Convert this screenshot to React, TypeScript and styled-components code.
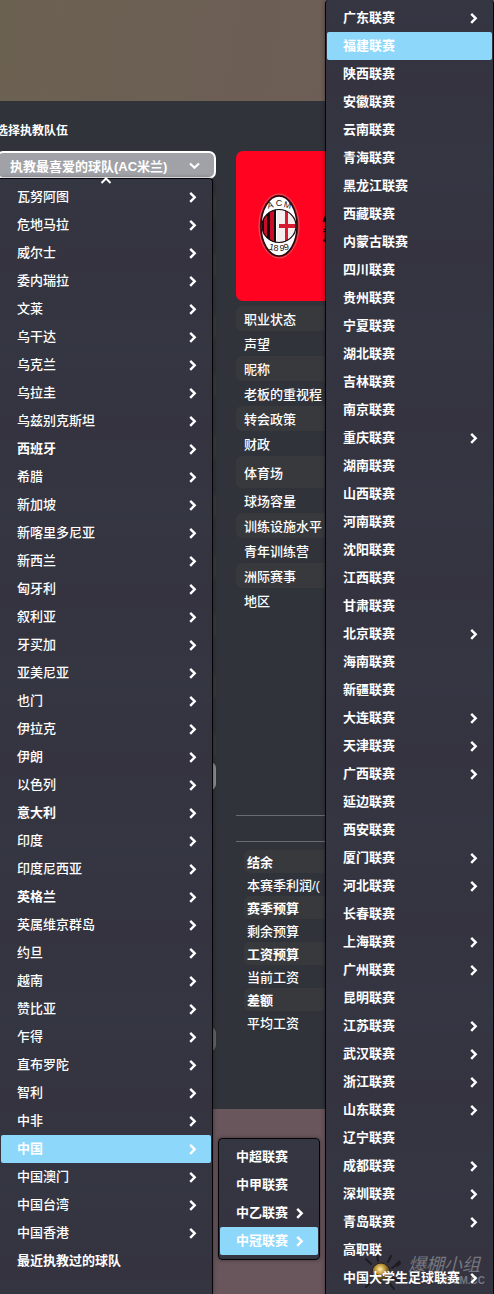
import React from 'react';
import styled, { createGlobalStyle, css } from 'styled-components';

const GlobalStyle = createGlobalStyle`
  * { box-sizing: border-box; }
  body {
    margin: 0;
    background: #6b575d;
    color: #fff;
    font-family: "Liberation Sans", "Noto Sans CJK SC", sans-serif;
    font-size: 13px;
  }
  button, select { font: inherit; color: inherit; }
  ul, dl, dd { margin: 0; padding: 0; list-style: none; }
`;

const Page = styled.div`
  position: relative;
  min-height: 100vh;
  overflow: hidden;
  display: flex;
  flex-direction: column;
  background: linear-gradient(#6b575d, #69565c);
`;

const TopBand = styled.header`
  height: 101px;
  background: linear-gradient(100deg, #6b6151, #6d5e56 60%, #6b5b58);
`;

const Panel = styled.main`
  display: flex;
  gap: 20px;
  min-height: 1008px;
  background: #30333a;
`;

const Side = styled.section`
  flex: 0 0 216px;
  display: flex;
  flex-direction: column;
`;

const Title = styled.label`
  height: 50px;
  padding-top: 21px;
  margin-left: -4px;
  font-size: 12px;
  line-height: 18px;
  font-weight: 700;
`;

const SelectBox = styled.div`
  display: flex;
  align-items: center;
  height: 28px;
  margin-left: -4px;
  padding: 2px 14px 0 0;
  border: 2px solid #fff;
  border-radius: 7px;
  background: #a1a2a8;
`;

const Select = styled.select`
  flex: 1;
  min-width: 0;
  padding: 0 0 0 12px;
  border: 0;
  appearance: none;
  background: transparent;
  font-weight: 700;
  outline: none;
`;

const TeamList = styled.div`
  margin-top: 13px;
  height: 570px;
  display: grid;
  grid-auto-rows: 28px;
  row-gap: 32px;
`;

const TeamStripe = styled.div`
  border-radius: 6px;
  background: #38393c;
`;

const Bar = styled.div<{ $color: string; $height: number }>`
  height: ${(p) => p.$height}px;
  border-radius: 6px;
  background: ${(p) => p.$color};
`;

const BarStack = styled.div`
  display: flex;
  flex-direction: column;
  gap: 237px;
`;

const Detail = styled.section`
  flex: 1;
  min-width: 0;
  padding-top: 50px;
`;

const Card = styled.div`
  display: flex;
  align-items: center;
  gap: 22px;
  height: 150px;
  padding-left: 22px;
  border-radius: 7px 0 0 7px;
  background: #ff0320;
  color: #140408;
`;

const CardText = styled.div`
  font-size: 14px;
  line-height: 18px;
  font-weight: 700;
  white-space: nowrap;
`;

const Facts = styled.dl`
  margin-top: 5px;
`;

const Fact = styled.div<{ $shade?: boolean; $tall?: boolean }>`
  display: flex;
  align-items: center;
  height: ${(p) => (p.$tall ? 32 : 25)}px;
  padding-left: 8px;
  border-radius: 6px;
  background: ${(p) => (p.$shade ? '#38393d' : 'transparent')};
  font-weight: 500;
  white-space: nowrap;
`;

const Divider = styled.div`
  height: 27px;
  margin: 202px 0 8px;
  border: solid #696c70;
  border-width: 1px 0;
`;

const Finance = styled.dl`
  padding-left: 8px;
`;

const FinanceRow = styled.div<{ $head?: boolean }>`
  display: flex;
  align-items: center;
  height: 23px;
  padding-left: 3px;
  border-radius: 6px;
  background: ${(p) => (p.$head ? '#38393d' : 'transparent')};
  font-weight: ${(p) => (p.$head ? 700 : 500)};
  white-space: nowrap;
`;

const menuPlace = {
  nation: css`
    top: 178px;
    bottom: 0;
    left: 0;
    width: 213px;
    border-width: 1px 1px 0 0;
    border-radius: 0 4px 0 0;
    padding: 4px 1px 0;
  `,
  tier: css`
    top: 1138px;
    left: 218px;
    width: 102px;
    border-width: 1px;
    border-radius: 4px;
    padding: 4px 1px;
  `,
  region: css`
    top: 0;
    bottom: 0;
    left: 325px;
    right: 0;
    border-width: 0 1px;
    border-radius: 4px 4px 0 0;
    padding: 4px 1px 2px;
  `,
};

const Menu = styled.nav<{ $place: keyof typeof menuPlace }>`
  position: absolute;
  border: solid #050507;
  background: repeating-linear-gradient(#343642, #353340 84px, #343642 168px);
  box-shadow: 0 0 4px rgba(0, 0, 0, 0.4);
  ${(p) => menuPlace[p.$place]}
`;

const Row = styled.button<{ $bold?: boolean; $active?: boolean }>`
  position: relative;
  display: flex;
  align-items: center;
  justify-content: space-between;
  width: 100%;
  height: 28px;
  padding: 0 14px 0 16px;
  border: 0;
  border-radius: 2px;
  background: ${(p) => (p.$active ? '#8dd7fb' : 'transparent')};
  font-weight: ${(p) => (p.$bold ? 700 : 500)};
  text-align: left;
  white-space: nowrap;
`;

const RowLabel = styled.span`
  padding-bottom: 4px;
`;

const ScrollHint = styled.svg`
  position: absolute;
  top: -2px;
  left: 100px;
`;

const Watermark = styled.div`
  position: absolute;
  right: 8px;
  bottom: 0;
  display: flex;
  align-items: flex-end;
  gap: 6px;
  color: #76777f;
`;

const WatermarkText = styled.div`
  width: 77px;
  padding-bottom: 8px;
  font-size: 18px;
  line-height: 21px;
  font-style: italic;
`;

const WatermarkUrl = styled.div`
  font-size: 10px;
  line-height: 10px;
  font-style: normal;
  font-weight: 700;
  text-align: right;
`;

const Chevron = () => (
  <svg width="8" height="12" viewBox="0 0 8 12" fill="none" stroke="#fff" strokeWidth="2.4" aria-hidden="true">
    <path d="M1.200 1.800 5.700 6.300 1.200 10.800" />
  </svg>
);

const Crest = () => (
  <svg width="42" height="68" viewBox="0 0 42 68" role="img" aria-label="AC Milan 1899">
    <defs>
      <clipPath id="disc"><ellipse cx="21" cy="34" rx="17" ry="16.500" /></clipPath>
    </defs>
    <ellipse cx="21" cy="34" rx="20" ry="32" fill="#c20b22" stroke="#dd5b5d" />
    <ellipse cx="21" cy="34" rx="18" ry="30" fill="#fff" stroke="#23070c" strokeWidth="1.5" />
    <g clipPath="url(#disc)">
      <path fill="#17080b" d="M3 16h15v36H3z" />
      <path fill="#c90d28" d="M6 16h3v36H6zM12 16h4v36h-4z" />
      <path fill="#f5eeee" d="M19 16h20v36H19z" />
      <path fill="#d71932" d="M27 16h3v36h-3zM21 32h18v4H21z" />
    </g>
    <ellipse cx="21" cy="34" rx="17" ry="16.500" fill="none" stroke="#16090b" strokeWidth="1.2" />
    <g fill="#1c1518" fontFamily="Liberation Sans" fontSize="9" textAnchor="middle">
      <text x="13" y="16" transform="rotate(-14 13 16)">A</text>
      <text x="21" y="14">C</text>
      <text x="29" y="16" transform="rotate(14 29 16)">M</text>
      <text x="13" y="58" transform="rotate(12 13 58)">1</text>
      <text x="18" y="59">8</text>
      <text x="24" y="59">9</text>
      <text x="29" y="58" transform="rotate(-12 29 58)">9</text>
    </g>
  </svg>
);

const Sun = () => (
  <svg width="40" height="42" viewBox="0 0 40 42" aria-hidden="true">
    <defs>
      <radialGradient id="sun" cx="45%" cy="35%">
        <stop offset="0" stopColor="#fff0ae" />
        <stop offset=".5" stopColor="#c49a3d" />
        <stop offset="1" stopColor="#584222" />
      </radialGradient>
    </defs>
    <path
      stroke="#1c1c22"
      strokeWidth="2"
      strokeLinecap="round"
      d="M9 12 4 7M16 9l-1-6M26 10l3-6M30 16l7-5M31 26l6 3M28 32l4 5M8 31l-4 4M6 21H1"
    />
    <path fill="#1c1c22" d="m33 12 5-4 1 4-4 3z" />
    <circle cx="19" cy="20" r="9" fill="url(#sun)" stroke="#292019" />
    <path d="M13 21q6 6 12 0" fill="none" stroke="#5a431e" strokeWidth="1.5" />
  </svg>
);

const nations =
  '瓦努阿图 危地马拉 威尔士 委内瑞拉 文莱 乌干达 乌克兰 乌拉圭 乌兹别克斯坦 西班牙 希腊 新加坡 新喀里多尼亚 新西兰 匈牙利 叙利亚 牙买加 亚美尼亚 也门 伊拉克 伊朗 以色列 意大利 印度 印度尼西亚 英格兰 英属维京群岛 约旦 越南 赞比亚 乍得 直布罗陀 智利 中非 中国 中国澳门 中国台湾 中国香港 最近执教过的球队'.split(' ');
const boldNations = ['西班牙', '意大利', '英格兰', '中国', '最近执教过的球队'];

const tiers = ['中超联赛', '中甲联赛', '中乙联赛', '中冠联赛'];

const regions =
  '广东 福建 陕西 安徽 云南 青海 黑龙江 西藏 内蒙古 四川 贵州 宁夏 湖北 吉林 南京 重庆 湖南 山西 河南 沈阳 江西 甘肃 北京 海南 新疆 大连 天津 广西 延边 西安 厦门 河北 长春 上海 广州 昆明 江苏 武汉 浙江 山东 辽宁 成都 深圳 青岛'
    .split(' ')
    .map((name) => `${name}联赛`)
    .concat('高职联', '中国大学生足球联赛');
const nested = ['广东', '重庆', '北京', '大连', '天津', '广西', '厦门', '河北', '上海', '广州', '江苏', '武汉', '浙江', '山东', '成都', '深圳', '青岛', '中国大学生'];

const facts = '职业状态 声望 昵称 老板的重视程 转会政策 财政 体育场 球场容量 训练设施水平 青年训练营 洲际赛事 地区'.split(' ');
const shadedFacts = ['职业状态', '昵称', '转会政策', '体育场', '训练设施水平', '洲际赛事'];
const finance = '结余 本赛季利润/( 赛季预算 剩余预算 工资预算 当前工资 差额 平均工资'.split(' ');

export default function App() {
  return (
    <Page>
      <GlobalStyle />
      <TopBand />
      <Panel>
        <Side>
          <Title htmlFor="team">选择执教队伍</Title>
          <SelectBox>
            <Select id="team">
              <option>执教最喜爱的球队(AC米兰)</option>
            </Select>
            <svg width="11" height="8" viewBox="0 0 11 8" fill="none" stroke="#fff" strokeWidth="2.2" aria-hidden="true">
              <path d="m1 1.500 4.500 4.300L10 1.500" />
            </svg>
          </SelectBox>
          <TeamList>
            {Array.from({ length: 10 }, (_, i) => (
              <TeamStripe key={i} />
            ))}
          </TeamList>
          <BarStack>
            <Bar $color="#8b8c8e" $height={28} />
            <Bar $color="#616265" $height={24} />
          </BarStack>
        </Side>
        <Detail>
          <Card>
            <Crest />
            <CardText>
              AC米兰
              <br />
              意大利
            </CardText>
          </Card>
          <Facts>
            {facts.map((name) => (
              <Fact key={name} $shade={shadedFacts.includes(name)} $tall={name === '体育场'}>
                <dt>{name}</dt>
              </Fact>
            ))}
          </Facts>
          <Divider />
          <Finance>
            {finance.map((name, i) => (
              <FinanceRow key={name} $head={i % 2 === 0}>
                <dt>{name}</dt>
              </FinanceRow>
            ))}
          </Finance>
        </Detail>
      </Panel>

      <Menu $place="nation" aria-label="国家">
        <ScrollHint width="12" height="7" viewBox="0 0 12 7" fill="none" stroke="#fff" strokeWidth="2" aria-hidden="true">
          <path d="m1.500 6 4.500-4.500L10.500 6" />
        </ScrollHint>
        {nations.map((name, i) => (
          <Row key={name} type="button" $bold={boldNations.includes(name)} $active={name === '中国'}>
            <RowLabel>{name}</RowLabel>
            {i < nations.length - 1 && <Chevron />}
          </Row>
        ))}
      </Menu>

      <Menu $place="tier" aria-label="级别">
        {tiers.map((name, i) => (
          <Row key={name} type="button" $bold $active={i === 3}>
            <RowLabel>{name}</RowLabel>
            {i > 1 && <Chevron />}
          </Row>
        ))}
      </Menu>

      <Menu $place="region" aria-label="地区联赛">
        <Watermark>
          <Sun />
          <WatermarkText>
            爆棚小组
            <WatermarkUrl>.COM.CC</WatermarkUrl>
          </WatermarkText>
        </Watermark>
        {regions.map((name) => (
          <Row key={name} type="button" $bold $active={name === '福建联赛'}>
            <RowLabel>{name}</RowLabel>
            {nested.some((n) => name.startsWith(n)) && <Chevron />}
          </Row>
        ))}
      </Menu>
    </Page>
  );
}
